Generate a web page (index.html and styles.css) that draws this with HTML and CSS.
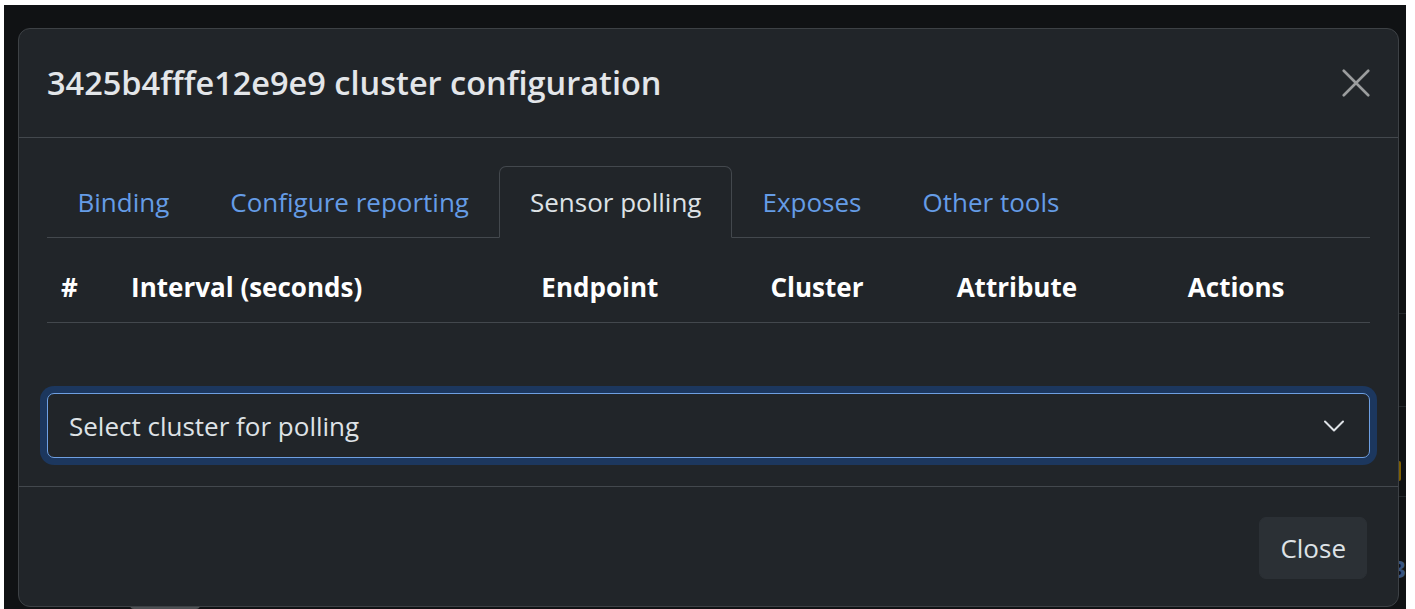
FILE: index.html
```html
<!DOCTYPE html>
<html lang="en">
<head>
<meta charset="utf-8">
<title>Cluster configuration</title>
<link rel="stylesheet" href="styles.css">
</head>
<body>
<div class="screen">
  <!-- device page underneath the dialog -->
  <div class="page">
    <div class="page-row page-row-first"></div>
    <div class="page-row page-row-mid"></div>
    <div class="page-row page-row-warn"><span class="warn-chip"></span></div>
    <div class="page-row page-row-last"><span class="page-num">3</span></div>
    <div class="page-bottom"><span class="page-btn"></span></div>
  </div>
  <div class="backdrop"></div>

  <div class="modal" role="dialog" aria-labelledby="modal-title">
    <div class="modal-header">
      <h5 class="modal-title" id="modal-title">3425b4fffe12e9e9 cluster configuration</h5>
      <button class="btn-close" type="button" aria-label="Close">
        <svg width="28" height="28" viewBox="0 0 16 16" aria-hidden="true">
          <path d="M1 1L15 15M15 1L1 15" stroke="#fff" stroke-width="1.5" stroke-linecap="round" fill="none"/>
        </svg>
      </button>
    </div>

    <div class="modal-body">
      <ul class="nav-tabs">
        <li><a class="nav-link">Binding</a></li>
        <li><a class="nav-link">Configure reporting</a></li>
        <li><a class="nav-link active">Sensor polling</a></li>
        <li><a class="nav-link">Exposes</a></li>
        <li><a class="nav-link">Other tools</a></li>
      </ul>

      <div class="tab-content">
        <table class="table">
          <colgroup>
            <col class="col-num">
            <col class="col-interval">
            <col class="col-endpoint">
            <col class="col-cluster">
            <col class="col-attribute">
            <col class="col-actions">
          </colgroup>
          <thead>
            <tr>
              <th>#</th>
              <th>Interval (seconds)</th>
              <th>Endpoint</th>
              <th>Cluster</th>
              <th>Attribute</th>
              <th>Actions</th>
            </tr>
          </thead>
          <tbody></tbody>
        </table>

        <div class="form-select" tabindex="0">
          <span class="select-text">Select cluster for polling</span>
          <svg class="select-chevron" width="22" height="14" viewBox="0 0 22 14" aria-hidden="true">
            <path d="M2 2.5l9 9 9-9" stroke="#dee2e6" stroke-width="2" stroke-linecap="round" stroke-linejoin="round" fill="none"/>
          </svg>
        </div>
      </div>
    </div>

    <div class="modal-footer">
      <button class="btn" type="button">Close</button>
    </div>
  </div>
</div>
</body>
</html>
```

FILE: styles.css
```css
* {
  box-sizing: border-box;
}

html,
body {
  margin: 0;
  padding: 0;
  background: #ffffff;
}

body {
  font-family: "Open Sans", "Noto Sans", sans-serif;
  color: #dee2e6;
}

.screen {
  position: relative;
  margin: 5px 9px 0 4px;
  height: 604px;
  overflow: hidden;
  background: #212529;
}

/* ---- page under the dialog ---- */
.page {
  display: flex;
  flex-direction: column;
  height: 100%;
}

.page-row {
  display: flex;
  justify-content: flex-end;
  align-items: flex-start;
  margin-left: 1300px;
  border-bottom: 1px solid #495057;
}

.page-row-first {
  height: 314px;
}

.page-row-mid {
  height: 95px;
}

.page-row-warn {
  height: 90px;
  padding: 54px 5px 0 0;
}

.warn-chip {
  width: 30px;
  height: 20px;
  background: #ffc107;
  border-radius: 2px;
}

.page-row-last {
  height: 102px;
  border-bottom: none;
  padding: 60px 0 0 0;
}

.page-num {
  font-size: 24px;
  line-height: 24px;
  font-weight: 700;
  color: #6ea8fe;
}

.page-bottom {
  padding: 1px 0 0 126px;
}

.page-btn {
  display: block;
  width: 70px;
  height: 10px;
  background: #9aa0a6;
  border-radius: 4px;
}

.backdrop {
  position: absolute;
  inset: 0;
  background: rgba(0, 0, 0, 0.5);
}

/* ---- dialog ---- */
.modal {
  position: absolute;
  left: 14px;
  top: 23px;
  width: 1381px;
  background: #212529;
  border: 1px solid #3d4145;
  border-radius: 12px;
}

.modal-header {
  display: flex;
  align-items: center;
  padding: 28px;
  border-bottom: 1px solid #43484d;
}

.modal-title {
  margin: 0;
  font-size: 32.5px;
  line-height: 52px;
  font-weight: 600;
  color: #e3e6e9;
}

.btn-close {
  margin-left: auto;
  padding: 0;
  border: none;
  background: transparent;
  opacity: 0.55;
  display: flex;
}

.modal-body {
  padding: 28px;
}

.nav-tabs {
  display: flex;
  margin: 0;
  padding: 0;
  list-style: none;
  border-bottom: 1px solid #43484d;
}

.nav-link {
  display: block;
  margin-bottom: -1px;
  padding: 14px 29.5px;
  font-size: 26px;
  line-height: 42px;
  color: #659ce6;
  border: 1px solid transparent;
  border-radius: 7px 7px 0 0;
}

.nav-link.active {
  color: #dee2e6;
  background: #212529;
  border-color: #43484d #43484d #212529;
}

.tab-content {
  padding-top: 14px;
}

.table {
  width: 100%;
  border-collapse: collapse;
  table-layout: fixed;
}

.col-num { width: 70px; }
.col-interval { width: 410px; }
.col-endpoint { width: 229px; }
.col-cluster { width: 186px; }
.col-attribute { width: 231px; }
.col-actions { width: 196px; }

.table th {
  padding: 14px;
  font-size: 26px;
  line-height: 42px;
  font-weight: 700;
  text-align: left;
  color: #ffffff;
  border-bottom: 1px solid #43484d;
  white-space: nowrap;
}

.form-select {
  display: flex;
  align-items: center;
  margin-top: 70px;
  height: 65px;
  padding: 10.5px 24px 10.5px 21px;
  font-size: 26px;
  line-height: 42px;
  color: #dee2e6;
  background: #212529;
  border: 1px solid #6e9fe2;
  border-radius: 7px;
  box-shadow: 0 0 0 7px #1c375e;
  outline: none;
}

.select-chevron {
  margin-left: auto;
  flex: none;
}

.modal-footer {
  display: flex;
  justify-content: flex-end;
  padding: 23px 24px 20px;
  border-top: 1px solid #43484d;
}

.btn {
  margin: 7px;
  height: 62px;
  padding: 0 20px;
  font-family: inherit;
  font-size: 26px;
  line-height: 40px;
  color: #dee2e6;
  background: #2b3035;
  border: 1px solid #2b3035;
  border-radius: 7px;
}
```
